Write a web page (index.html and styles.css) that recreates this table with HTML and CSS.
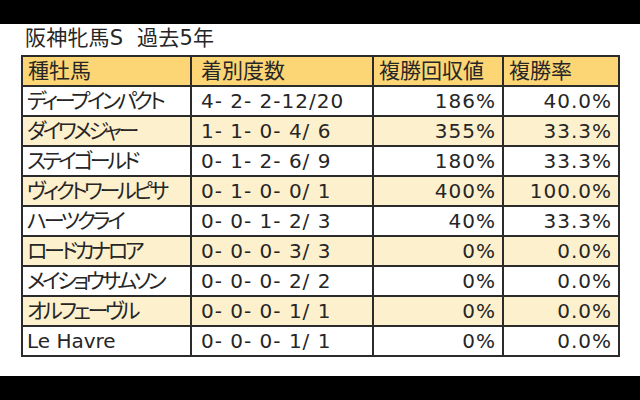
FILE: index.html
```html
<!DOCTYPE html>
<html lang="ja">
<head>
<meta charset="utf-8">
<link rel="stylesheet" href="styles.css">
</head>
<body>
<div class="screen">
  <div class="bar"></div>
  <main class="content">
    <h1 class="title">阪神牝馬S&nbsp;&nbsp;過去5年</h1>
    <table class="stats">
      <colgroup>
        <col class="c-name"><col class="c-rec"><col class="c-ret"><col class="c-rate">
      </colgroup>
      <thead>
        <tr class="head"><th>種牡馬</th><th class="rec">着別度数</th><th>複勝回収値</th><th>複勝率</th></tr>
      </thead>
      <tbody>
        <tr><td class="kana">ディープインパクト</td><td class="rec num">4- 2- 2-12/20</td><td class="num r">186%</td><td class="num r">40.0%</td></tr>
        <tr class="alt"><td class="kana">ダイワメジャー</td><td class="rec num">1- 1- 0- 4/ 6</td><td class="num r">355%</td><td class="num r">33.3%</td></tr>
        <tr><td class="kana">ステイゴールド</td><td class="rec num">0- 1- 2- 6/ 9</td><td class="num r">180%</td><td class="num r">33.3%</td></tr>
        <tr class="alt"><td class="kana">ヴィクトワールピサ</td><td class="rec num">0- 1- 0- 0/ 1</td><td class="num r">400%</td><td class="num r">100.0%</td></tr>
        <tr><td class="kana">ハーツクライ</td><td class="rec num">0- 0- 1- 2/ 3</td><td class="num r">40%</td><td class="num r">33.3%</td></tr>
        <tr class="alt"><td class="kana">ロードカナロア</td><td class="rec num">0- 0- 0- 3/ 3</td><td class="num r">0%</td><td class="num r">0.0%</td></tr>
        <tr><td class="kana">メイショウサムソン</td><td class="rec num">0- 0- 0- 2/ 2</td><td class="num r">0%</td><td class="num r">0.0%</td></tr>
        <tr class="alt"><td class="kana">オルフェーヴル</td><td class="rec num">0- 0- 0- 1/ 1</td><td class="num r">0%</td><td class="num r">0.0%</td></tr>
        <tr><td class="latin">Le Havre</td><td class="rec num">0- 0- 0- 1/ 1</td><td class="num r">0%</td><td class="num r">0.0%</td></tr>
      </tbody>
    </table>
  </main>
  <div class="bar"></div>
</div>
</body>
</html>
```
FILE: styles.css
```css
html, body {
  margin: 0;
  padding: 0;
  background: #000;
}
.screen {
  width: 640px;
  height: 400px;
  display: flex;
  flex-direction: column;
  font-family: "DejaVu Sans", "Noto Sans CJK JP", sans-serif;
  color: #262626;
}
.bar {
  height: 24px;
  background: #000;
  flex: none;
}
.content {
  flex: 1;
  background: #fff;
  padding: 2px 0 0 0;
}
.title {
  margin: 0 0 4px 25px;
  font-size: 21px;
  line-height: 25px;
  font-weight: normal;
  font-feature-settings: "palt";
  letter-spacing: 0.2px;
}
.stats {
  margin-left: 21px;
  width: 597px;
  border-collapse: collapse;
  table-layout: fixed;
  font-size: 21px;
}
.c-name { width: 169px; }
.c-rec { width: 182px; }
.c-ret { width: 130px; }
.c-rate { width: 116px; }
.stats th, .stats td {
  border: 2px solid #2b2b2b;
  height: 28px;
  padding: 0 4px;
  line-height: 28px;
  text-align: left;
  font-weight: normal;
  white-space: nowrap;
  overflow: hidden;
}
.stats th {
  background: #fcd574;
  padding-left: 5px;
}
.stats .kana {
  font-feature-settings: "palt";
  letter-spacing: -3.3px;
}
.stats .latin {
  font-size: 20px;
}
.stats .rec {
  padding-left: 9px;
}
.stats .num {
  font-size: 20px;
  letter-spacing: 1px;
}
.stats .r {
  text-align: right;
  padding-right: 6px;
}
.alt td {
  background: #fdf0cd;
}
```
